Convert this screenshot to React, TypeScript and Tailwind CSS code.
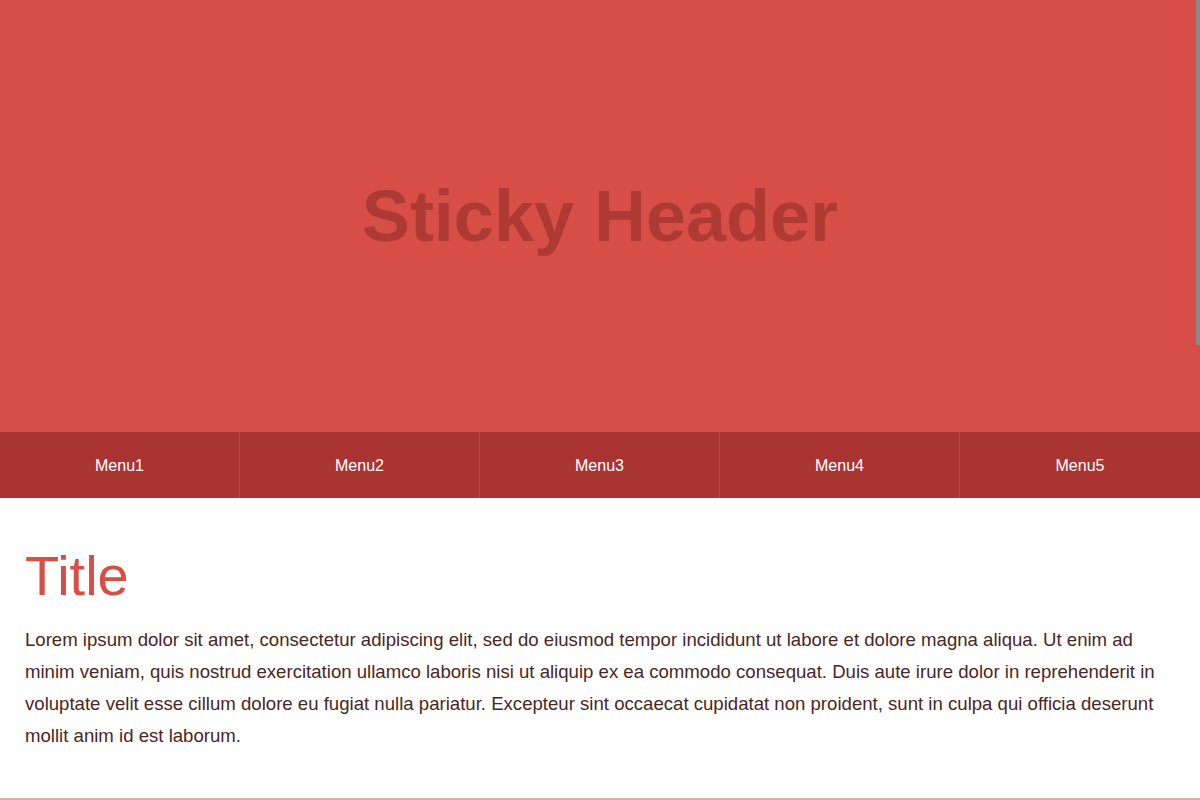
import React from "react";

export default function App() {
  const menus = ["Menu1", "Menu2", "Menu3", "Menu4", "Menu5"];
  return (
    <div className="relative w-[1200px] h-[800px] overflow-hidden bg-white" style={{ fontFamily: '"Liberation Sans", Arial, sans-serif' }}>
      <header className="h-[432px] bg-[#d64e46] flex items-center justify-center">
        <h1 className="text-[72px] font-bold text-[#ae3a34] leading-none">Sticky Header</h1>
      </header>
      <nav className="h-[66px] bg-[#aa3431] grid grid-cols-5">
        {menus.map((m, i) => (
          <div
            key={m}
            className={`flex items-center justify-center text-white text-[16px] pt-[1px] ${i < 4 ? "border-r border-[#c1473f]" : ""}`}
          >
            {m}
          </div>
        ))}
      </nav>
      <main className="px-[25px] pt-[50px]">
        <h2 className="text-[56px] leading-none text-[#d64e46] mb-[20px]">Title</h2>
        <p className="text-[18.6px] leading-[32px] text-[#4b2624]">
          Lorem ipsum dolor sit amet, consectetur adipiscing elit, sed do eiusmod tempor incididunt ut labore et dolore magna aliqua. Ut enim ad minim veniam, quis nostrud exercitation ullamco laboris nisi ut aliquip ex ea commodo consequat. Duis aute irure dolor in reprehenderit in voluptate velit esse cillum dolore eu fugiat nulla pariatur. Excepteur sint occaecat cupidatat non proident, sunt in culpa qui officia deserunt mollit anim id est laborum.
        </p>
      </main>
      <div className="absolute left-0 right-0 top-[798px] h-[2px] bg-[#e8a8a3]" />
      <div className="absolute right-0 top-0 w-[4px] h-[345px] bg-[#8a8a8a]" />
    </div>
  );
}
